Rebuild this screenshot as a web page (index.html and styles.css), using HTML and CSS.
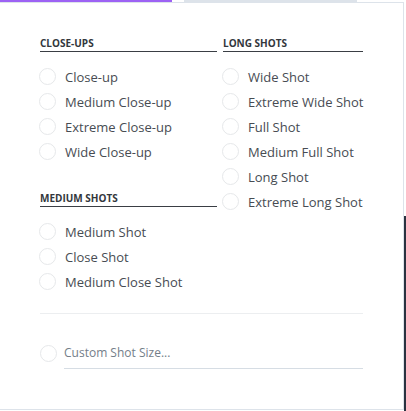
FILE: index.html
```html
<!DOCTYPE html>
<html>
<head>
<meta charset="utf-8">
<link rel="stylesheet" href="styles.css">
</head>
<body>
<div class="tabs">
  <div class="tab tab-active"></div>
  <div class="tab tab-idle"></div>
</div>
<div class="backdrop"></div>
<div class="card">
  <div class="grid">
    <div class="col">
      <div class="heading">CLOSE-UPS</div>
      <ul class="list">
        <li class="opt"><span class="radio"></span>Close-up</li>
        <li class="opt"><span class="radio"></span>Medium Close-up</li>
        <li class="opt"><span class="radio"></span>Extreme Close-up</li>
        <li class="opt"><span class="radio"></span>Wide Close-up</li>
      </ul>
      <div class="heading heading-gap">MEDIUM SHOTS</div>
      <ul class="list">
        <li class="opt"><span class="radio"></span>Medium Shot</li>
        <li class="opt"><span class="radio"></span>Close Shot</li>
        <li class="opt"><span class="radio"></span>Medium Close Shot</li>
      </ul>
    </div>
    <div class="col">
      <div class="heading">LONG SHOTS</div>
      <ul class="list">
        <li class="opt"><span class="radio"></span>Wide Shot</li>
        <li class="opt"><span class="radio"></span>Extreme Wide Shot</li>
        <li class="opt"><span class="radio"></span>Full Shot</li>
        <li class="opt"><span class="radio"></span>Medium Full Shot</li>
        <li class="opt"><span class="radio"></span>Long Shot</li>
        <li class="opt"><span class="radio"></span>Extreme Long Shot</li>
      </ul>
    </div>
  </div>
  <div class="sep"></div>
  <div class="custom">
    <span class="radio"></span>
    <div class="custom-input">Custom Shot Size...</div>
  </div>
</div>
</body>
</html>
```

FILE: styles.css
```css
html, body {
  margin: 0;
  padding: 0;
  background: #ffffff;
  font-family: "Open Sans", "Liberation Sans", sans-serif;
}
body {
  width: 406px;
  height: 411px;
  position: relative;
  overflow: hidden;
}
.tabs {
  display: flex;
  height: 2px;
}
.tab-active {
  width: 172px;
  background: #9d62f4;
}
.tab-idle {
  width: 173px;
  margin-left: 12px;
  background: #dde3ea;
}
.backdrop {
  position: absolute;
  right: 0;
  top: 216px;
  width: 2px;
  bottom: 0;
  background: #2a3240;
}
.card {
  width: 363px;
  height: 406px;
  box-sizing: content-box;
  border-top: 1px solid #dde3ea;
  border-right: 1px solid #dde3ea;
  border-bottom: 1px solid #dde3ea;
  padding-left: 40px;
  padding-top: 0;
}
.grid {
  display: grid;
  grid-template-columns: 177px 140px;
  column-gap: 6px;
  width: 323px;
  padding-top: 33px;
}
.heading {
  font-size: 10px;
  font-weight: 700;
  line-height: 14px;
  color: #33373c;
  padding-bottom: 1px;
  border-bottom: 1px solid #3a3e44;
}
.heading-gap {
  margin-top: 27px;
}
.list {
  list-style: none;
  margin: 12px 0 0 0;
  padding: 0;
}
.opt {
  display: flex;
  align-items: center;
  height: 25px;
  font-size: 13px;
  color: #474c53;
  white-space: nowrap;
}
.radio {
  display: inline-block;
  box-sizing: border-box;
  width: 17px;
  height: 17px;
  border: 1px solid #e6e8ea;
  border-radius: 50%;
  margin-left: -1px;
  margin-right: 9px;
  flex-shrink: 0;
}
.sep {
  width: 323px;
  height: 1px;
  background: #eceef0;
  margin-top: 19px;
}
.custom {
  display: flex;
  align-items: center;
  width: 323px;
  margin-top: 24px;
}
.custom .radio {
  margin-left: 0;
  margin-right: 7px;
}
.custom-input {
  flex: 1;
  height: 30px;
  line-height: 30px;
  font-size: 12px;
  color: #747e89;
  border-bottom: 1px solid #d6dde4;
}
```
